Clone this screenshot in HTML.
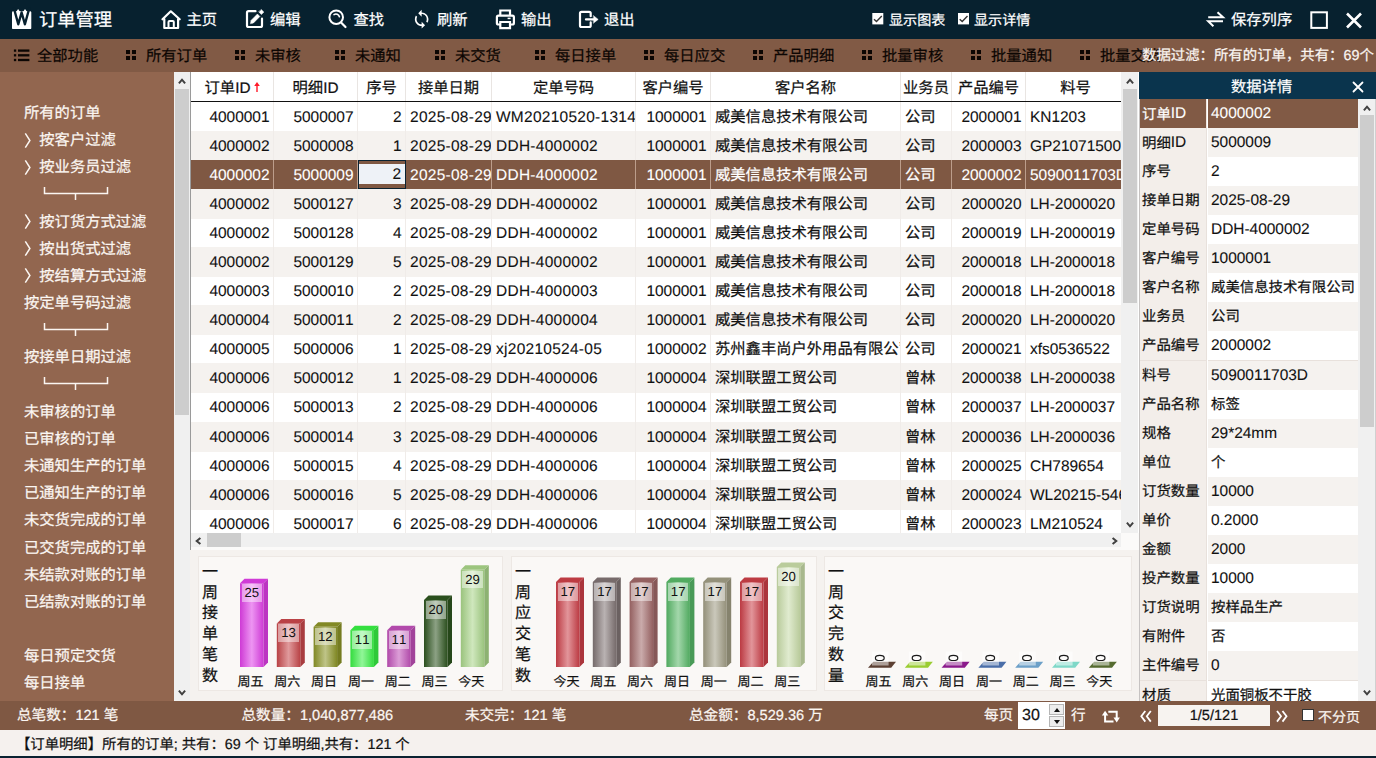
<!DOCTYPE html>
<html lang="zh-CN"><head><meta charset="utf-8"><title>订单管理</title>
<style>
*{box-sizing:border-box;margin:0;padding:0}
html,body{width:1376px;height:758px;overflow:hidden;background:#F5F2EF}
body{position:relative;font-family:"Liberation Sans",sans-serif;font-size:15.3px;color:#111;line-height:1;text-rendering:geometricPrecision;-webkit-text-stroke:.22px;font-kerning:none}
.n{font-size:15.45px;-webkit-text-stroke:.1px}
.d{font-size:15.45px;letter-spacing:.3px;-webkit-text-stroke:.1px}
.a{position:absolute}
.t{position:absolute;white-space:nowrap;line-height:20px;height:20px}
.w{color:#fff}
svg{position:absolute;overflow:visible}
#titlebar{left:0;top:0;width:1376px;height:39px;background:#07212F}
#toolbar{left:0;top:39px;width:1376px;height:33px;background:#815A45;overflow:hidden}
#toolbar .t{color:#0c0603}
#sidebar{left:0;top:72px;width:174px;height:629px;background:#92664F;overflow:hidden}
#sidebar .t{color:#FBF6F2;left:24px}
.sb{background:#F0F0F0}
.thumb{background:#CDCDCD}
#grid{left:190px;top:72px;width:931px;height:461px;background:#fff;overflow:hidden;border-left:1px solid #9A9A9A}
.hd{position:absolute;top:0;height:29px;line-height:33px;text-align:center;white-space:nowrap;border-right:1px solid #E9E5E2;background:#fff;overflow:hidden}
.row{position:absolute;left:-1px;width:931px;height:30px}
.c{position:absolute;top:0;height:100%;line-height:32px;white-space:nowrap;overflow:hidden;border-right:1px solid #F0ECE9;padding:0 3.5px 0 4px}
.r{text-align:right}
.c.n,.c.d{line-height:31px}
.row.alt{background:#F5F2EF}
.row.sel{background:#7F5843;color:#fff}
.row.sel .c{border-right-color:#BC9D8B}
#status{left:0;top:701px;width:1376px;height:29px;background:#7F5843}
#status .t{color:#FBF6F2;top:4.5px;font-size:14.6px}
#info{left:0;top:730px;width:1376px;height:26px;background:#F5F1EE}
#bottom{left:0;top:756px;width:1376px;height:2px;background:#0A2231}
.pl{position:absolute;left:0;width:68px;height:30px;font-size:14.4px;line-height:31px;padding-left:3px;background:#F3EEEA;white-space:nowrap;border-bottom:1px solid #E8E1DC;border-right:1px solid #E8E1DC;overflow:hidden}
.pv{position:absolute;left:69px;width:150px;height:30px;font-size:14.4px;line-height:31px;padding-left:3px;white-space:nowrap;overflow:hidden;border-bottom:1px solid #E8E1DC}
.pv .n,.pl .n{position:relative;top:-1.2px}
.cp{position:absolute;top:556px;height:135px;background:#FAF8F6;border:1px solid #EDE8E4}
.vt{position:absolute;width:16px;font-size:16px;line-height:20.7px;text-align:center;color:#111}
.xl{position:absolute;font-size:13px;line-height:16px;width:40px;text-align:center;white-space:nowrap;color:#111}
.vl{position:absolute;font-size:13.2px;line-height:18px;text-align:center;color:#111;background:rgba(255,255,255,.45);-webkit-text-stroke:0}
</style></head><body>

<div class="a" id="titlebar">
<div class="t w" style="left:39px;top:8.5px;font-size:18.3px;line-height:22px;height:22px">订单管理</div>
<div class="t w" style="left:186.5px;top:10.5px">主页</div>
<div class="t w" style="left:270px;top:10.5px">编辑</div>
<div class="t w" style="left:353.5px;top:10.5px">查找</div>
<div class="t w" style="left:437px;top:10.5px">刷新</div>
<div class="t w" style="left:521px;top:10.5px">输出</div>
<div class="t w" style="left:604px;top:10.5px">退出</div>
<div class="t w" style="left:1231px;top:10.5px">保存列序</div>
<div class="t w" style="left:889px;top:9.5px;font-size:14.1px">显示图表</div>
<div class="t w" style="left:974px;top:9.5px;font-size:14.1px">显示详情</div>
<svg style="left:0;top:0" width="1376" height="39" viewBox="0 0 1376 39" fill="none" stroke="#fff" stroke-width="2.2" stroke-linecap="round" stroke-linejoin="round">
<rect x="12" y="11.3" width="19.3" height="17.8" rx="1.2" fill="#fff" stroke="none"/>
<path d="M18.100 9l2.500 3.500v2h-4.800v-2zM25 9l2.500 3.500v2h-4.800v-2z" fill="#fff" stroke="none"/>
<path d="M13.700 7.500L18.300 24.300l3.300-11.800 3.300 11.800L29.500 7.500" stroke="#07212F" stroke-width="2.4" stroke-linecap="butt" stroke-linejoin="round"/>
<path d="M162.500 19.300L170.800 11.300l8.900 8"/><path d="M164.300 19v9h13.800v-9"/><path d="M168.500 27.500v-5.500a1 1 0 0 1 1-1h3.300a1 1 0 0 1 1 1v5.500" stroke-width="2"/>
<path d="M255.500 11.200H248.500a1.500 1.500 0 0 0-1.500 1.500V25.500a1.500 1.500 0 0 0 1.500 1.500H260.500a1.500 1.500 0 0 0 1.500-1.500V18.500"/>
<path d="M250.500 23.400l.5-3 6.400-6.400 2.500 2.500-6.400 6.400z" fill="#fff" stroke-width=".5"/><path d="M261.400 9.700l2.400 2.400-2.400 2.400-2.400-2.400z" fill="#fff" stroke-width=".6"/>
<circle cx="336.200" cy="17.200" r="6.800" stroke-width="2"/><path d="M341.300 22.800l4.200 4.200"/><path d="M334 14.600a3.600 3.600 0 0 1 5.400 2.200" stroke-width="1.600"/>
<g transform="translate(411.450 9) scale(.85)" fill="#fff" stroke="none"><path d="M12 4V1L8 5l4 4V6c3.310 0 6 2.690 6 6 0 1.010-.25 1.970-.7 2.800l1.460 1.460C19.540 15.030 20 13.570 20 12c0-4.420-3.580-8-8-8zm0 14c-3.310 0-6-2.690-6-6 0-1.010.25-1.970.7-2.800L5.240 7.740C4.460 8.970 4 10.430 4 12c0 4.420 3.580 8 8 8v3l4-4-4-4v3z"/></g>
<path d="M500.300 14.500v-4h9.700v4" stroke-width="2.2" stroke-linejoin="miter"/><path d="M499.500 24.500h-1.100a1.500 1.500 0 0 1-1.500-1.500v-5.800a1.500 1.500 0 0 1 1.500-1.500h14a1.500 1.500 0 0 1 1.500 1.500V23a1.500 1.500 0 0 1-1.500 1.500h-1.100" stroke-width="2.2"/><path d="M500.300 22h9.700v6.100h-9.700z" stroke-width="2.2" stroke-linejoin="miter"/><path d="M507.600 18.400h3" stroke-width="1.500" stroke-linecap="butt"/>
<path d="M590.700 16.200V13.300a1.500 1.500 0 0 0-1.500-1.500H581.500a1.500 1.500 0 0 0-1.500 1.500V25.500a1.500 1.500 0 0 0 1.500 1.500h7.700a1.500 1.500 0 0 0 1.500-1.500V22.400"/><path d="M586 19.400h8" stroke-width="2.300"/><path d="M593.600 15.700l4.600 3.700-4.600 3.700z" fill="#fff" stroke-width=".5"/>
<rect x="872.3" y="13" width="11" height="11.400" fill="#fff" stroke="none"/><path d="M874 19.300l2.500 2.300 5.300-5.500" stroke="#333" stroke-width="1.400" stroke-linecap="butt" stroke-linejoin="miter"/>
<rect x="958" y="13" width="11" height="11.400" fill="#fff" stroke="none"/><path d="M959.7 19.300l2.500 2.300 5.300-5.500" stroke="#333" stroke-width="1.400" stroke-linecap="butt" stroke-linejoin="miter"/>
<path d="M1208.200 17.300h14.800l-5.500-5" stroke-width="2" stroke-linecap="butt" stroke-linejoin="miter"/><path d="M1223 21.200h-14.800l5.200 5.100" stroke-width="2" stroke-linecap="butt" stroke-linejoin="miter"/>
<rect x="1311.300" y="12.300" width="15.600" height="15.600" stroke-width="2" stroke-linejoin="miter"/>
<path d="M1347 13.500l14 14M1361 13.500l-14 14" stroke-width="2.600" stroke-linecap="butt"/>
</svg>
</div>
<div class="a" id="toolbar">
<svg style="left:0;top:0" width="1376" height="33" viewBox="0 0 1376 33" fill="#0c0603">
<rect x="13.900" y="10.45" width="2.300" height="2.300"/><rect x="18" y="10.45" width="11.400" height="2.300"/>
<rect x="13.900" y="15.15" width="2.300" height="2.300"/><rect x="18" y="15.15" width="11.400" height="2.300"/>
<rect x="13.900" y="19.85" width="2.300" height="2.300"/><rect x="18" y="19.85" width="11.400" height="2.300"/>
<path d="M126 11h4v4h-4zm6 0h4v4h-4zm-6 6h4v4h-4zm6 0h4v4h-4z"/>
<path d="M235 11h4v4h-4zm6 0h4v4h-4zm-6 6h4v4h-4zm6 0h4v4h-4z"/>
<path d="M335 11h4v4h-4zm6 0h4v4h-4zm-6 6h4v4h-4zm6 0h4v4h-4z"/>
<path d="M435 11h4v4h-4zm6 0h4v4h-4zm-6 6h4v4h-4zm6 0h4v4h-4z"/>
<path d="M535 11h4v4h-4zm6 0h4v4h-4zm-6 6h4v4h-4zm6 0h4v4h-4z"/>
<path d="M644 11h4v4h-4zm6 0h4v4h-4zm-6 6h4v4h-4zm6 0h4v4h-4z"/>
<path d="M753 11h4v4h-4zm6 0h4v4h-4zm-6 6h4v4h-4zm6 0h4v4h-4z"/>
<path d="M862 11h4v4h-4zm6 0h4v4h-4zm-6 6h4v4h-4zm6 0h4v4h-4z"/>
<path d="M971 11h4v4h-4zm6 0h4v4h-4zm-6 6h4v4h-4zm6 0h4v4h-4z"/>
<path d="M1080 11h4v4h-4zm6 0h4v4h-4zm-6 6h4v4h-4zm6 0h4v4h-4z"/>
</svg>
<div class="t" style="left:37px;top:8px">全部功能</div>
<div class="t" style="left:146px;top:8px">所有订单</div>
<div class="t" style="left:255px;top:8px">未审核</div>
<div class="t" style="left:355px;top:8px">未通知</div>
<div class="t" style="left:455px;top:8px">未交货</div>
<div class="t" style="left:555px;top:8px">每日接单</div>
<div class="t" style="left:664px;top:8px">每日应交</div>
<div class="t" style="left:773px;top:8px">产品明细</div>
<div class="t" style="left:882px;top:8px">批量审核</div>
<div class="t" style="left:991px;top:8px">批量通知</div>
<div class="t" style="left:1100px;top:8px">批量交货</div>
<div class="t" style="left:1142px;top:6.5px;color:#FBF6F2;font-size:14.4px">数据过滤：所有的订单，共有：69个</div>
</div>
<div class="a" id="sidebar">
<div class="t" style="top:32px">所有的订单</div>
<svg style="left:24px;top:60.5px" width="7" height="15" viewBox="0 0 7 15" fill="none" stroke="#FBF6F2" stroke-width="1.5"><path d="M1.300 .3L5.900 7.500 1.300 14.700"/></svg>
<div class="t" style="top:59.2px;left:39.300px">按客户过滤</div>
<svg style="left:24px;top:87.6px" width="7" height="15" viewBox="0 0 7 15" fill="none" stroke="#FBF6F2" stroke-width="1.5"><path d="M1.300 .3L5.900 7.500 1.300 14.700"/></svg>
<div class="t" style="top:86.3px;left:39.300px">按业务员过滤</div>
<svg style="left:43px;top:114.8px" width="66" height="14" viewBox="0 0 66 14" fill="none" stroke="#FBF6F2" stroke-width="1.5"><path d="M1.500 0v6.500h63V0M32.500 6.500V13"/></svg>
<svg style="left:24px;top:141.9px" width="7" height="15" viewBox="0 0 7 15" fill="none" stroke="#FBF6F2" stroke-width="1.5"><path d="M1.300 .3L5.900 7.500 1.300 14.700"/></svg>
<div class="t" style="top:140.6px;left:39.300px">按订货方式过滤</div>
<svg style="left:24px;top:169.1px" width="7" height="15" viewBox="0 0 7 15" fill="none" stroke="#FBF6F2" stroke-width="1.5"><path d="M1.300 .3L5.900 7.500 1.300 14.700"/></svg>
<div class="t" style="top:167.8px;left:39.300px">按出货式过滤</div>
<svg style="left:24px;top:196.3px" width="7" height="15" viewBox="0 0 7 15" fill="none" stroke="#FBF6F2" stroke-width="1.5"><path d="M1.300 .3L5.900 7.500 1.300 14.700"/></svg>
<div class="t" style="top:195px;left:39.300px">按结算方式过滤</div>
<div class="t" style="top:222.1px">按定单号码过滤</div>
<svg style="left:43px;top:250.6px" width="66" height="14" viewBox="0 0 66 14" fill="none" stroke="#FBF6F2" stroke-width="1.5"><path d="M1.500 0v6.500h63V0M32.500 6.500V13"/></svg>
<div class="t" style="top:276.4px">按接单日期过滤</div>
<svg style="left:43px;top:304.9px" width="66" height="14" viewBox="0 0 66 14" fill="none" stroke="#FBF6F2" stroke-width="1.5"><path d="M1.500 0v6.500h63V0M32.500 6.500V13"/></svg>
<div class="t" style="top:330.8px">未审核的订单</div>
<div class="t" style="top:357.9px">已审核的订单</div>
<div class="t" style="top:385.1px">未通知生产的订单</div>
<div class="t" style="top:412.2px">已通知生产的订单</div>
<div class="t" style="top:439.4px">未交货完成的订单</div>
<div class="t" style="top:466.6px">已交货完成的订单</div>
<div class="t" style="top:493.7px">未结款对账的订单</div>
<div class="t" style="top:520.9px">已结款对账的订单</div>
<div class="t" style="top:575.2px">每日预定交货</div>
<div class="t" style="top:602.4px">每日接单</div>
</div>
<div class="a sb" style="left:173.5px;top:72px;width:17px;height:629px"></div><div class="a thumb" style="left:175px;top:89px;width:14px;height:325.5px"></div><svg style="left:178px;top:78px" width="8" height="6" viewBox="0 0 8 6" fill="none" stroke="#404040" stroke-width="2"><path d="M.9 5.400L4 1.700l3.100 3.700"/></svg><svg style="left:178px;top:690.4px" width="8" height="6" viewBox="0 0 8 6" fill="none" stroke="#404040" stroke-width="2"><path d="M.9 .6L4 4.300 7.100 .6"/></svg>
<div class="a" id="grid">
<div class="hd" style="left:-1px;width:84px;padding-right:8px">订单ID<svg style="left:64px;top:10px" width="6" height="10" viewBox="0 0 6 10"><path d="M3 0L5.800 4H3.700V10H2.300V4H.2z" fill="#FF1A2A"/></svg></div>
<div class="hd" style="left:83px;width:84px">明细ID</div>
<div class="hd" style="left:167px;width:48px">序号</div>
<div class="hd" style="left:215px;width:86px">接单日期</div>
<div class="hd" style="left:301px;width:144px">定单号码</div>
<div class="hd" style="left:445px;width:75px">客户编号</div>
<div class="hd" style="left:520px;width:190px">客户名称</div>
<div class="hd" style="left:710px;width:51px">业务员</div>
<div class="hd" style="left:761px;width:74px">产品编号</div>
<div class="hd" style="left:835px;width:100px">料号</div>
<div class="a" style="left:-1px;top:29px;width:932px;height:1px;background:#111"></div>
<div class="row" style="top:30px">
<div class="c r n" style="left:0px;width:84px">4000001</div>
<div class="c r n" style="left:84px;width:84px">5000007</div>
<div class="c r n" style="left:168px;width:48px">2</div>
<div class="c  d" style="left:216px;width:86px">2025-08-29</div>
<div class="c  d" style="left:302px;width:144px">WM20210520-1314</div>
<div class="c r n" style="left:446px;width:75px">1000001</div>
<div class="c " style="left:521px;width:190px">威美信息技术有限公司</div>
<div class="c " style="left:711px;width:51px">公司</div>
<div class="c r n" style="left:762px;width:74px">2000001</div>
<div class="c  n" style="left:836px;width:100px">KN1203</div>
</div>
<div class="row alt" style="top:59px">
<div class="c r n" style="left:0px;width:84px">4000002</div>
<div class="c r n" style="left:84px;width:84px">5000008</div>
<div class="c r n" style="left:168px;width:48px">1</div>
<div class="c  d" style="left:216px;width:86px">2025-08-29</div>
<div class="c  d" style="left:302px;width:144px">DDH-4000002</div>
<div class="c r n" style="left:446px;width:75px">1000001</div>
<div class="c " style="left:521px;width:190px">威美信息技术有限公司</div>
<div class="c " style="left:711px;width:51px">公司</div>
<div class="c r n" style="left:762px;width:74px">2000003</div>
<div class="c  n" style="left:836px;width:100px">GP210715008</div>
</div>
<div class="row sel" style="top:88px">
<div class="c r n" style="left:0px;width:84px">4000002</div>
<div class="c r n" style="left:84px;width:84px">5000009</div>
<div class="c r n" style="left:168px;width:48px">2</div>
<div class="c  d" style="left:216px;width:86px">2025-08-29</div>
<div class="c  d" style="left:302px;width:144px">DDH-4000002</div>
<div class="c r n" style="left:446px;width:75px">1000001</div>
<div class="c " style="left:521px;width:190px">威美信息技术有限公司</div>
<div class="c " style="left:711px;width:51px">公司</div>
<div class="c r n" style="left:762px;width:74px">2000002</div>
<div class="c  n" style="left:836px;width:100px">5090011703D</div>
<div class="a" style="left:168px;top:0;width:48px;height:29px;border:1px solid #0A2231;background:#7F5843"></div>
<div class="a r n" style="left:169px;top:4px;width:46px;height:20px;background:#EEF2F7;color:#111;line-height:21px;padding-right:4px">2</div>
</div>
<div class="row alt" style="top:117px">
<div class="c r n" style="left:0px;width:84px">4000002</div>
<div class="c r n" style="left:84px;width:84px">5000127</div>
<div class="c r n" style="left:168px;width:48px">3</div>
<div class="c  d" style="left:216px;width:86px">2025-08-29</div>
<div class="c  d" style="left:302px;width:144px">DDH-4000002</div>
<div class="c r n" style="left:446px;width:75px">1000001</div>
<div class="c " style="left:521px;width:190px">威美信息技术有限公司</div>
<div class="c " style="left:711px;width:51px">公司</div>
<div class="c r n" style="left:762px;width:74px">2000020</div>
<div class="c  n" style="left:836px;width:100px">LH-2000020</div>
</div>
<div class="row" style="top:146px">
<div class="c r n" style="left:0px;width:84px">4000002</div>
<div class="c r n" style="left:84px;width:84px">5000128</div>
<div class="c r n" style="left:168px;width:48px">4</div>
<div class="c  d" style="left:216px;width:86px">2025-08-29</div>
<div class="c  d" style="left:302px;width:144px">DDH-4000002</div>
<div class="c r n" style="left:446px;width:75px">1000001</div>
<div class="c " style="left:521px;width:190px">威美信息技术有限公司</div>
<div class="c " style="left:711px;width:51px">公司</div>
<div class="c r n" style="left:762px;width:74px">2000019</div>
<div class="c  n" style="left:836px;width:100px">LH-2000019</div>
</div>
<div class="row alt" style="top:175px">
<div class="c r n" style="left:0px;width:84px">4000002</div>
<div class="c r n" style="left:84px;width:84px">5000129</div>
<div class="c r n" style="left:168px;width:48px">5</div>
<div class="c  d" style="left:216px;width:86px">2025-08-29</div>
<div class="c  d" style="left:302px;width:144px">DDH-4000002</div>
<div class="c r n" style="left:446px;width:75px">1000001</div>
<div class="c " style="left:521px;width:190px">威美信息技术有限公司</div>
<div class="c " style="left:711px;width:51px">公司</div>
<div class="c r n" style="left:762px;width:74px">2000018</div>
<div class="c  n" style="left:836px;width:100px">LH-2000018</div>
</div>
<div class="row" style="top:204px">
<div class="c r n" style="left:0px;width:84px">4000003</div>
<div class="c r n" style="left:84px;width:84px">5000010</div>
<div class="c r n" style="left:168px;width:48px">2</div>
<div class="c  d" style="left:216px;width:86px">2025-08-29</div>
<div class="c  d" style="left:302px;width:144px">DDH-4000003</div>
<div class="c r n" style="left:446px;width:75px">1000001</div>
<div class="c " style="left:521px;width:190px">威美信息技术有限公司</div>
<div class="c " style="left:711px;width:51px">公司</div>
<div class="c r n" style="left:762px;width:74px">2000018</div>
<div class="c  n" style="left:836px;width:100px">LH-2000018</div>
</div>
<div class="row alt" style="top:233px">
<div class="c r n" style="left:0px;width:84px">4000004</div>
<div class="c r n" style="left:84px;width:84px">5000011</div>
<div class="c r n" style="left:168px;width:48px">2</div>
<div class="c  d" style="left:216px;width:86px">2025-08-29</div>
<div class="c  d" style="left:302px;width:144px">DDH-4000004</div>
<div class="c r n" style="left:446px;width:75px">1000001</div>
<div class="c " style="left:521px;width:190px">威美信息技术有限公司</div>
<div class="c " style="left:711px;width:51px">公司</div>
<div class="c r n" style="left:762px;width:74px">2000020</div>
<div class="c  n" style="left:836px;width:100px">LH-2000020</div>
</div>
<div class="row" style="top:262px">
<div class="c r n" style="left:0px;width:84px">4000005</div>
<div class="c r n" style="left:84px;width:84px">5000006</div>
<div class="c r n" style="left:168px;width:48px">1</div>
<div class="c  d" style="left:216px;width:86px">2025-08-29</div>
<div class="c  d" style="left:302px;width:144px">xj20210524-05</div>
<div class="c r n" style="left:446px;width:75px">1000002</div>
<div class="c " style="left:521px;width:190px">苏州鑫丰尚户外用品有限公司</div>
<div class="c " style="left:711px;width:51px">公司</div>
<div class="c r n" style="left:762px;width:74px">2000021</div>
<div class="c  n" style="left:836px;width:100px">xfs0536522</div>
</div>
<div class="row alt" style="top:291px">
<div class="c r n" style="left:0px;width:84px">4000006</div>
<div class="c r n" style="left:84px;width:84px">5000012</div>
<div class="c r n" style="left:168px;width:48px">1</div>
<div class="c  d" style="left:216px;width:86px">2025-08-29</div>
<div class="c  d" style="left:302px;width:144px">DDH-4000006</div>
<div class="c r n" style="left:446px;width:75px">1000004</div>
<div class="c " style="left:521px;width:190px">深圳联盟工贸公司</div>
<div class="c " style="left:711px;width:51px">曾林</div>
<div class="c r n" style="left:762px;width:74px">2000038</div>
<div class="c  n" style="left:836px;width:100px">LH-2000038</div>
</div>
<div class="row" style="top:320px">
<div class="c r n" style="left:0px;width:84px">4000006</div>
<div class="c r n" style="left:84px;width:84px">5000013</div>
<div class="c r n" style="left:168px;width:48px">2</div>
<div class="c  d" style="left:216px;width:86px">2025-08-29</div>
<div class="c  d" style="left:302px;width:144px">DDH-4000006</div>
<div class="c r n" style="left:446px;width:75px">1000004</div>
<div class="c " style="left:521px;width:190px">深圳联盟工贸公司</div>
<div class="c " style="left:711px;width:51px">曾林</div>
<div class="c r n" style="left:762px;width:74px">2000037</div>
<div class="c  n" style="left:836px;width:100px">LH-2000037</div>
</div>
<div class="row alt" style="top:350px">
<div class="c r n" style="left:0px;width:84px">4000006</div>
<div class="c r n" style="left:84px;width:84px">5000014</div>
<div class="c r n" style="left:168px;width:48px">3</div>
<div class="c  d" style="left:216px;width:86px">2025-08-29</div>
<div class="c  d" style="left:302px;width:144px">DDH-4000006</div>
<div class="c r n" style="left:446px;width:75px">1000004</div>
<div class="c " style="left:521px;width:190px">深圳联盟工贸公司</div>
<div class="c " style="left:711px;width:51px">曾林</div>
<div class="c r n" style="left:762px;width:74px">2000036</div>
<div class="c  n" style="left:836px;width:100px">LH-2000036</div>
</div>
<div class="row" style="top:379px">
<div class="c r n" style="left:0px;width:84px">4000006</div>
<div class="c r n" style="left:84px;width:84px">5000015</div>
<div class="c r n" style="left:168px;width:48px">4</div>
<div class="c  d" style="left:216px;width:86px">2025-08-29</div>
<div class="c  d" style="left:302px;width:144px">DDH-4000006</div>
<div class="c r n" style="left:446px;width:75px">1000004</div>
<div class="c " style="left:521px;width:190px">深圳联盟工贸公司</div>
<div class="c " style="left:711px;width:51px">曾林</div>
<div class="c r n" style="left:762px;width:74px">2000025</div>
<div class="c  n" style="left:836px;width:100px">CH789654</div>
</div>
<div class="row alt" style="top:408px">
<div class="c r n" style="left:0px;width:84px">4000006</div>
<div class="c r n" style="left:84px;width:84px">5000016</div>
<div class="c r n" style="left:168px;width:48px">5</div>
<div class="c  d" style="left:216px;width:86px">2025-08-29</div>
<div class="c  d" style="left:302px;width:144px">DDH-4000006</div>
<div class="c r n" style="left:446px;width:75px">1000004</div>
<div class="c " style="left:521px;width:190px">深圳联盟工贸公司</div>
<div class="c " style="left:711px;width:51px">曾林</div>
<div class="c r n" style="left:762px;width:74px">2000024</div>
<div class="c  n" style="left:836px;width:100px">WL20215-5468</div>
</div>
<div class="row" style="top:437px">
<div class="c r n" style="left:0px;width:84px">4000006</div>
<div class="c r n" style="left:84px;width:84px">5000017</div>
<div class="c r n" style="left:168px;width:48px">6</div>
<div class="c  d" style="left:216px;width:86px">2025-08-29</div>
<div class="c  d" style="left:302px;width:144px">DDH-4000006</div>
<div class="c r n" style="left:446px;width:75px">1000004</div>
<div class="c " style="left:521px;width:190px">深圳联盟工贸公司</div>
<div class="c " style="left:711px;width:51px">曾林</div>
<div class="c r n" style="left:762px;width:74px">2000023</div>
<div class="c  n" style="left:836px;width:100px">LM210524</div>
</div>
</div>
<div class="a sb" style="left:1121px;top:72px;width:17px;height:461px"></div><div class="a thumb" style="left:1122.5px;top:89px;width:14px;height:214px"></div><svg style="left:1125.5px;top:78px" width="8" height="6" viewBox="0 0 8 6" fill="none" stroke="#404040" stroke-width="2"><path d="M.9 5.400L4 1.700l3.100 3.700"/></svg><svg style="left:1125.5px;top:522.4px" width="8" height="6" viewBox="0 0 8 6" fill="none" stroke="#404040" stroke-width="2"><path d="M.9 .6L4 4.300 7.100 .6"/></svg>
<div class="a" style="left:1138px;top:72px;width:1px;height:478px;background:#fff"></div>
<div class="a" style="left:191px;top:533px;width:948px;height:17px;background:#FBFAF9"></div>
<div class="a sb" style="left:191px;top:533px;width:930px;height:14px"></div>
<div class="a thumb" style="left:207px;top:533px;width:34px;height:14px"></div>
<svg style="left:195px;top:536.500px" width="6" height="8" viewBox="0 0 6 8" fill="none" stroke="#404040" stroke-width="2"><path d="M5.400 .9L1.700 4l3.700 3.100"/></svg>
<svg style="left:1112px;top:536.500px" width="6" height="8" viewBox="0 0 6 8" fill="none" stroke="#404040" stroke-width="2"><path d="M.6 .9L4.300 4 .6 7.100"/></svg>
<div class="a" style="left:190px;top:533px;width:1px;height:17px;background:#9A9A9A"></div>
<div class="a" style="left:190px;top:550px;width:949px;height:151px;background:#F5F2EF"></div>
<div class="cp" style="left:198px;width:305px"></div>
<div class="vt" style="left:202px;top:563px">一<br>周<br>接<br>单<br>笔<br>数</div>
<svg style="left:0;top:0" width="1376" height="758" viewBox="0 0 1376 758"><defs><linearGradient id="g240_583" x1="0" x2="1" y1="0" y2="0"><stop offset="0" stop-color="#CE3AD5"/><stop offset="0.5" stop-color="#ED95F2"/><stop offset="1" stop-color="#CE3AD5"/></linearGradient></defs><rect x="240" y="583.25" width="23.5" height="83.75" fill="url(#g240_583)"/><path d="M240 583.25l4.5 -4.5h23.5l-4.5 4.5z" fill="#D03BD7"/><path d="M263.5 583.25l4.5 -4.5v83.75l-4.5 4.5z" fill="#BC35C2"/><defs><linearGradient id="g276_623" x1="0" x2="1" y1="0" y2="0"><stop offset="0" stop-color="#B84245"/><stop offset="0.5" stop-color="#E09A9C"/><stop offset="1" stop-color="#B84245"/></linearGradient></defs><rect x="276.8" y="623.45" width="23.5" height="43.55" fill="url(#g276_623)"/><path d="M276.8 623.45l4.5 -4.5h23.5l-4.5 4.5z" fill="#BA4246"/><path d="M300.3 623.45l4.5 -4.5v43.55l-4.5 4.5z" fill="#A83C3F"/><defs><linearGradient id="g313_626" x1="0" x2="1" y1="0" y2="0"><stop offset="0" stop-color="#808824"/><stop offset="0.5" stop-color="#BFC488"/><stop offset="1" stop-color="#808824"/></linearGradient></defs><rect x="313.6" y="626.8" width="23.5" height="40.2" fill="url(#g313_626)"/><path d="M313.6 626.8l4.5 -4.5h23.5l-4.5 4.5z" fill="#828925"/><path d="M337.1 626.8l4.5 -4.5v40.2l-4.5 4.5z" fill="#757C21"/><defs><linearGradient id="g350_630" x1="0" x2="1" y1="0" y2="0"><stop offset="0" stop-color="#33DC3E"/><stop offset="0.5" stop-color="#91F698"/><stop offset="1" stop-color="#33DC3E"/></linearGradient></defs><rect x="350.4" y="630.15" width="23.5" height="36.85" fill="url(#g350_630)"/><path d="M350.4 630.15l4.5 -4.5h23.5l-4.5 4.5z" fill="#34DF3F"/><path d="M373.9 630.15l4.5 -4.5v36.85l-4.5 4.5z" fill="#2FC939"/><defs><linearGradient id="g387_630" x1="0" x2="1" y1="0" y2="0"><stop offset="0" stop-color="#B049A9"/><stop offset="0.5" stop-color="#DC9ED7"/><stop offset="1" stop-color="#B049A9"/></linearGradient></defs><rect x="387.2" y="630.15" width="23.5" height="36.85" fill="url(#g387_630)"/><path d="M387.2 630.15l4.5 -4.5h23.5l-4.5 4.5z" fill="#B24AAB"/><path d="M410.7 630.15l4.5 -4.5v36.85l-4.5 4.5z" fill="#A1439A"/><defs><linearGradient id="g424_600" x1="0" x2="1" y1="0" y2="0"><stop offset="0" stop-color="#2A4E1D"/><stop offset="0.5" stop-color="#8CA184"/><stop offset="1" stop-color="#2A4E1D"/></linearGradient></defs><rect x="424" y="600" width="23.5" height="67" fill="url(#g424_600)"/><path d="M424 600l4.5 -4.5h23.5l-4.5 4.5z" fill="#2A4F1D"/><path d="M447.5 600l4.5 -4.5v67l-4.5 4.5z" fill="#26471A"/><defs><linearGradient id="g460_569" x1="0" x2="1" y1="0" y2="0"><stop offset="0" stop-color="#9AC37D"/><stop offset="0.5" stop-color="#CFE7BD"/><stop offset="1" stop-color="#9AC37D"/></linearGradient></defs><rect x="460.8" y="569.85" width="23.5" height="97.15" fill="url(#g460_569)"/><path d="M460.8 569.85l4.5 -4.5h23.5l-4.5 4.5z" fill="#9CC57E"/><path d="M484.3 569.85l4.5 -4.5v97.15l-4.5 4.5z" fill="#8DB272"/></svg>
<div class="xl" style="left:230.5px;top:674px">周五</div>
<div class="vl" style="left:241.5px;top:584.25px;width:20.5px;height:17.5px">25</div>
<div class="xl" style="left:267.3px;top:674px">周六</div>
<div class="vl" style="left:278.3px;top:624.45px;width:20.5px;height:17.5px">13</div>
<div class="xl" style="left:304.1px;top:674px">周日</div>
<div class="vl" style="left:315.1px;top:627.8px;width:20.5px;height:17.5px">12</div>
<div class="xl" style="left:340.9px;top:674px">周一</div>
<div class="vl" style="left:351.9px;top:631.15px;width:20.5px;height:17.5px">11</div>
<div class="xl" style="left:377.7px;top:674px">周二</div>
<div class="vl" style="left:388.7px;top:631.15px;width:20.5px;height:17.5px">11</div>
<div class="xl" style="left:414.5px;top:674px">周三</div>
<div class="vl" style="left:425.5px;top:601px;width:20.5px;height:17.5px">20</div>
<div class="xl" style="left:451.3px;top:674px">今天</div>
<div class="vl" style="left:462.3px;top:570.85px;width:20.5px;height:17.5px">29</div>
<div class="cp" style="left:511px;width:306px"></div>
<div class="vt" style="left:515px;top:563px">一<br>周<br>应<br>交<br>笔<br>数</div>
<svg style="left:0;top:0" width="1376" height="758" viewBox="0 0 1376 758"><defs><linearGradient id="g556_582" x1="0" x2="1" y1="0" y2="0"><stop offset="0" stop-color="#BB3A42"/><stop offset="0.5" stop-color="#E2959A"/><stop offset="1" stop-color="#BB3A42"/></linearGradient></defs><rect x="556" y="582" width="23.5" height="85" fill="url(#g556_582)"/><path d="M556 582l4.5 -4.5h23.5l-4.5 4.5z" fill="#BD3B42"/><path d="M579.5 582l4.5 -4.5v85l-4.5 4.5z" fill="#AB353C"/><defs><linearGradient id="g592_582" x1="0" x2="1" y1="0" y2="0"><stop offset="0" stop-color="#756A6A"/><stop offset="0.5" stop-color="#B9B2B2"/><stop offset="1" stop-color="#756A6A"/></linearGradient></defs><rect x="592.8" y="582" width="23.5" height="85" fill="url(#g592_582)"/><path d="M592.8 582l4.5 -4.5h23.5l-4.5 4.5z" fill="#776B6B"/><path d="M616.3 582l4.5 -4.5v85l-4.5 4.5z" fill="#6B6161"/><defs><linearGradient id="g629_582" x1="0" x2="1" y1="0" y2="0"><stop offset="0" stop-color="#935F5F"/><stop offset="0.5" stop-color="#CAABAB"/><stop offset="1" stop-color="#935F5F"/></linearGradient></defs><rect x="629.6" y="582" width="23.5" height="85" fill="url(#g629_582)"/><path d="M629.6 582l4.5 -4.5h23.5l-4.5 4.5z" fill="#946060"/><path d="M653.1 582l4.5 -4.5v85l-4.5 4.5z" fill="#865757"/><defs><linearGradient id="g666_582" x1="0" x2="1" y1="0" y2="0"><stop offset="0" stop-color="#50A95F"/><stop offset="0.5" stop-color="#A3D7AB"/><stop offset="1" stop-color="#50A95F"/></linearGradient></defs><rect x="666.4" y="582" width="23.5" height="85" fill="url(#g666_582)"/><path d="M666.4 582l4.5 -4.5h23.5l-4.5 4.5z" fill="#51AB60"/><path d="M689.9 582l4.5 -4.5v85l-4.5 4.5z" fill="#499A57"/><defs><linearGradient id="g703_582" x1="0" x2="1" y1="0" y2="0"><stop offset="0" stop-color="#938F79"/><stop offset="0.5" stop-color="#CAC8BB"/><stop offset="1" stop-color="#938F79"/></linearGradient></defs><rect x="703.2" y="582" width="23.5" height="85" fill="url(#g703_582)"/><path d="M703.2 582l4.5 -4.5h23.5l-4.5 4.5z" fill="#94917A"/><path d="M726.7 582l4.5 -4.5v85l-4.5 4.5z" fill="#86836E"/><defs><linearGradient id="g740_582" x1="0" x2="1" y1="0" y2="0"><stop offset="0" stop-color="#BB3A42"/><stop offset="0.5" stop-color="#E2959A"/><stop offset="1" stop-color="#BB3A42"/></linearGradient></defs><rect x="740" y="582" width="23.5" height="85" fill="url(#g740_582)"/><path d="M740 582l4.5 -4.5h23.5l-4.5 4.5z" fill="#BD3B42"/><path d="M763.5 582l4.5 -4.5v85l-4.5 4.5z" fill="#AB353C"/><defs><linearGradient id="g776_567" x1="0" x2="1" y1="0" y2="0"><stop offset="0" stop-color="#B8CA9A"/><stop offset="0.5" stop-color="#E0EBCF"/><stop offset="1" stop-color="#B8CA9A"/></linearGradient></defs><rect x="776.8" y="567" width="23.5" height="100" fill="url(#g776_567)"/><path d="M776.8 567l4.5 -4.5h23.5l-4.5 4.5z" fill="#BACC9C"/><path d="M800.3 567l4.5 -4.5v100l-4.5 4.5z" fill="#A8B88D"/></svg>
<div class="xl" style="left:546.5px;top:674px">今天</div>
<div class="vl" style="left:557.5px;top:583px;width:20.5px;height:17.5px">17</div>
<div class="xl" style="left:583.3px;top:674px">周五</div>
<div class="vl" style="left:594.3px;top:583px;width:20.5px;height:17.5px">17</div>
<div class="xl" style="left:620.1px;top:674px">周六</div>
<div class="vl" style="left:631.1px;top:583px;width:20.5px;height:17.5px">17</div>
<div class="xl" style="left:656.9px;top:674px">周日</div>
<div class="vl" style="left:667.9px;top:583px;width:20.5px;height:17.5px">17</div>
<div class="xl" style="left:693.7px;top:674px">周一</div>
<div class="vl" style="left:704.7px;top:583px;width:20.5px;height:17.5px">17</div>
<div class="xl" style="left:730.5px;top:674px">周二</div>
<div class="vl" style="left:741.5px;top:583px;width:20.5px;height:17.5px">17</div>
<div class="xl" style="left:767.3px;top:674px">周三</div>
<div class="vl" style="left:778.3px;top:568px;width:20.5px;height:17.5px">20</div>
<div class="cp" style="left:824px;width:308px"></div>
<div class="vt" style="left:828px;top:563px">一<br>周<br>交<br>完<br>数<br>量</div>
<svg style="left:0;top:0" width="1376" height="758" viewBox="0 0 1376 758"><path d="M868 667.7l5.3 -5.900h22.700l-4.800 5.900z" fill="#5C4033"/><rect x="872" y="651.5" width="16.6" height="14" fill="rgba(255,255,255,.5)"/><ellipse cx="879.8" cy="657.9" rx="4.4" ry="2.6" fill="none" stroke="#1a1a1a" stroke-width="1.2"/><path d="M904.8 667.7l5.3 -5.900h22.700l-4.800 5.900z" fill="#9ACD32"/><rect x="908.8" y="651.5" width="16.6" height="14" fill="rgba(255,255,255,.5)"/><ellipse cx="916.6" cy="657.9" rx="4.4" ry="2.6" fill="none" stroke="#1a1a1a" stroke-width="1.2"/><path d="M941.6 667.7l5.3 -5.900h22.700l-4.800 5.900z" fill="#8B1A8B"/><rect x="945.6" y="651.5" width="16.6" height="14" fill="rgba(255,255,255,.5)"/><ellipse cx="953.4" cy="657.9" rx="4.4" ry="2.6" fill="none" stroke="#1a1a1a" stroke-width="1.2"/><path d="M978.4 667.7l5.3 -5.900h22.700l-4.800 5.900z" fill="#4A6EA8"/><rect x="982.4" y="651.5" width="16.6" height="14" fill="rgba(255,255,255,.5)"/><ellipse cx="990.2" cy="657.9" rx="4.4" ry="2.6" fill="none" stroke="#1a1a1a" stroke-width="1.2"/><path d="M1015.2 667.7l5.3 -5.900h22.700l-4.800 5.900z" fill="#6CA0C8"/><rect x="1019.2" y="651.5" width="16.6" height="14" fill="rgba(255,255,255,.5)"/><ellipse cx="1027" cy="657.9" rx="4.4" ry="2.6" fill="none" stroke="#1a1a1a" stroke-width="1.2"/><path d="M1052 667.7l5.3 -5.900h22.700l-4.800 5.900z" fill="#7FD8C8"/><rect x="1056" y="651.5" width="16.6" height="14" fill="rgba(255,255,255,.5)"/><ellipse cx="1063.8" cy="657.9" rx="4.4" ry="2.6" fill="none" stroke="#1a1a1a" stroke-width="1.2"/><path d="M1088.8 667.7l5.3 -5.900h22.700l-4.800 5.900z" fill="#556B2F"/><rect x="1092.8" y="651.5" width="16.6" height="14" fill="rgba(255,255,255,.5)"/><ellipse cx="1100.6" cy="657.9" rx="4.4" ry="2.6" fill="none" stroke="#1a1a1a" stroke-width="1.2"/></svg>
<div class="xl" style="left:858.5px;top:674px">周五</div>
<div class="xl" style="left:895.3px;top:674px">周六</div>
<div class="xl" style="left:932.1px;top:674px">周日</div>
<div class="xl" style="left:968.9px;top:674px">周一</div>
<div class="xl" style="left:1005.7px;top:674px">周二</div>
<div class="xl" style="left:1042.5px;top:674px">周三</div>
<div class="xl" style="left:1079.3px;top:674px">今天</div>
<div class="a" style="left:1139px;top:72px;width:237px;height:27px;background:#0A344D"></div>
<div class="t w" style="left:1231px;top:78px">数据详情</div>
<svg style="left:1353px;top:82px" width="10" height="10" viewBox="0 0 10 10" fill="none" stroke="#fff" stroke-width="2" stroke-linecap="round" stroke-linejoin="round"><path d="M0.500 0.500l9 9M9.500 0.500l-9 9" stroke-width="1.8"/></svg>
<div class="a" style="left:1139px;top:99px;width:219px;height:602px;overflow:hidden;background:#fff">
<div class="pl" style="top:0px;background:#815A45;color:#fff;border-color:#A58371;border-right-color:#EFE6E0">订单<span class="n">ID</span></div><div class="pv" style="top:0px;background:#815A45;color:#fff;border-color:#A58371"><span class="n">4000002</span></div>
<div class="pl" style="top:29px">明细<span class="n">ID</span></div><div class="pv" style="top:29px;background:#F5F2EF"><span class="n">5000009</span></div>
<div class="pl" style="top:58px">序号</div><div class="pv" style="top:58px;background:#fff"><span class="n">2</span></div>
<div class="pl" style="top:87px">接单日期</div><div class="pv" style="top:87px;background:#F5F2EF"><span class="n">2025-08-29</span></div>
<div class="pl" style="top:116px">定单号码</div><div class="pv" style="top:116px;background:#fff"><span class="n">DDH-4000002</span></div>
<div class="pl" style="top:145px">客户编号</div><div class="pv" style="top:145px;background:#F5F2EF"><span class="n">1000001</span></div>
<div class="pl" style="top:174px">客户名称</div><div class="pv" style="top:174px;background:#fff">威美信息技术有限公司</div>
<div class="pl" style="top:203px">业务员</div><div class="pv" style="top:203px;background:#F5F2EF">公司</div>
<div class="pl" style="top:232px">产品编号</div><div class="pv" style="top:232px;background:#fff"><span class="n">2000002</span></div>
<div class="pl" style="top:262px">料号</div><div class="pv" style="top:262px;background:#F5F2EF"><span class="n">5090011703D</span></div>
<div class="pl" style="top:291px">产品名称</div><div class="pv" style="top:291px;background:#fff">标签</div>
<div class="pl" style="top:320px">规格</div><div class="pv" style="top:320px;background:#F5F2EF"><span class="n">29*24mm</span></div>
<div class="pl" style="top:349px">单位</div><div class="pv" style="top:349px;background:#fff">个</div>
<div class="pl" style="top:378px">订货数量</div><div class="pv" style="top:378px;background:#F5F2EF"><span class="n">10000</span></div>
<div class="pl" style="top:407px">单价</div><div class="pv" style="top:407px;background:#fff"><span class="n">0.2000</span></div>
<div class="pl" style="top:436px">金额</div><div class="pv" style="top:436px;background:#F5F2EF"><span class="n">2000</span></div>
<div class="pl" style="top:465px">投产数量</div><div class="pv" style="top:465px;background:#fff"><span class="n">10000</span></div>
<div class="pl" style="top:494px">订货说明</div><div class="pv" style="top:494px;background:#F5F2EF">按样品生产</div>
<div class="pl" style="top:523px">有附件</div><div class="pv" style="top:523px;background:#fff">否</div>
<div class="pl" style="top:552px">主件编号</div><div class="pv" style="top:552px;background:#F5F2EF"><span class="n">0</span></div>
<div class="pl" style="top:582px">材质</div><div class="pv" style="top:582px;background:#fff">光面铜板不干胶</div>
</div>
<div class="a sb" style="left:1358px;top:99px;width:17px;height:602px"></div><div class="a thumb" style="left:1359.5px;top:115px;width:14px;height:312px"></div><svg style="left:1362.5px;top:105px" width="8" height="6" viewBox="0 0 8 6" fill="none" stroke="#404040" stroke-width="2"><path d="M.9 5.400L4 1.700l3.100 3.700"/></svg><svg style="left:1362.5px;top:690.4px" width="8" height="6" viewBox="0 0 8 6" fill="none" stroke="#404040" stroke-width="2"><path d="M.9 .6L4 4.300 7.100 .6"/></svg>
<div class="a" style="left:1139px;top:99px;width:1px;height:602px;background:#C6C3C2"></div>
<div class="a" style="left:1375px;top:99px;width:1px;height:602px;background:#D0D0D0"></div>
<div class="a" id="status">
<div class="t" style="left:17px">总笔数：121 笔</div>
<div class="t" style="left:241.5px">总数量：1,040,877,486</div>
<div class="t" style="left:465px">未交完：121 笔</div>
<div class="t" style="left:689px">总金额：8,529.36 万</div>
<div class="t" style="left:984px">每页</div>
<div class="a" style="left:1018px;top:1px;width:47px;height:27px;background:#fff"></div>
<div class="t" style="left:1022px;color:#111;font-size:16px;top:5px">30</div>
<div class="a" style="left:1049px;top:3px;width:15px;height:11px;background:#EDEDED;border:1px solid #B5B5B5"></div>
<div class="a" style="left:1049px;top:15px;width:15px;height:11px;background:#EDEDED;border:1px solid #B5B5B5"></div>
<svg style="left:1053.500px;top:6.500px" width="6" height="4" viewBox="0 0 6 4" fill="#111"><path d="M0 4L3 0l3 4z"/></svg>
<svg style="left:1053.500px;top:18.500px" width="6" height="4" viewBox="0 0 6 4" fill="#111"><path d="M0 0l3 4 3-4z"/></svg>
<div class="t" style="left:1071px">行</div>
<svg style="left:0;top:0" width="1376" height="29" viewBox="0 701 1376 29" fill="none" stroke="#fff" stroke-width="2" stroke-linejoin="miter">
<path d="M1113.500 721.400h-8.400v-6.500"/><path d="M1101.900 715.600l3.200-4.800 3.200 4.800z" fill="#fff" stroke="none"/>
<path d="M1108.300 711.800h8.400v6.500"/><path d="M1113.500 717.600l3.200 4.800 3.200-4.800z" fill="#fff" stroke="none"/>
<path d="M1145.300 711l-4 5.300 4 5.300M1150.800 711l-4 5.300 4 5.300" stroke-width="1.8"/>
<path d="M1277 711l4 5.300-4 5.300M1282.500 711l4 5.300-4 5.300" stroke-width="1.8"/>
</svg>
<div class="a" style="left:1158px;top:4px;width:112px;height:21px;background:#F7F3F0;color:#111;text-align:center;line-height:22px;font-size:14.6px">1/5/121</div>
<div class="a" style="left:1302px;top:8px;width:12px;height:12px;background:#fff;border:1px solid #333"></div>
<div class="t" style="left:1318px;font-size:14px;top:6px">不分页</div>
</div>
<div class="a" id="info"><div class="t" style="left:16px;top:5px;color:#111;font-size:14.35px">【订单明细】所有的订单; 共有：69 个 订单明细,共有：121 个</div></div>
<div class="a" id="bottom"></div>
</body></html>
